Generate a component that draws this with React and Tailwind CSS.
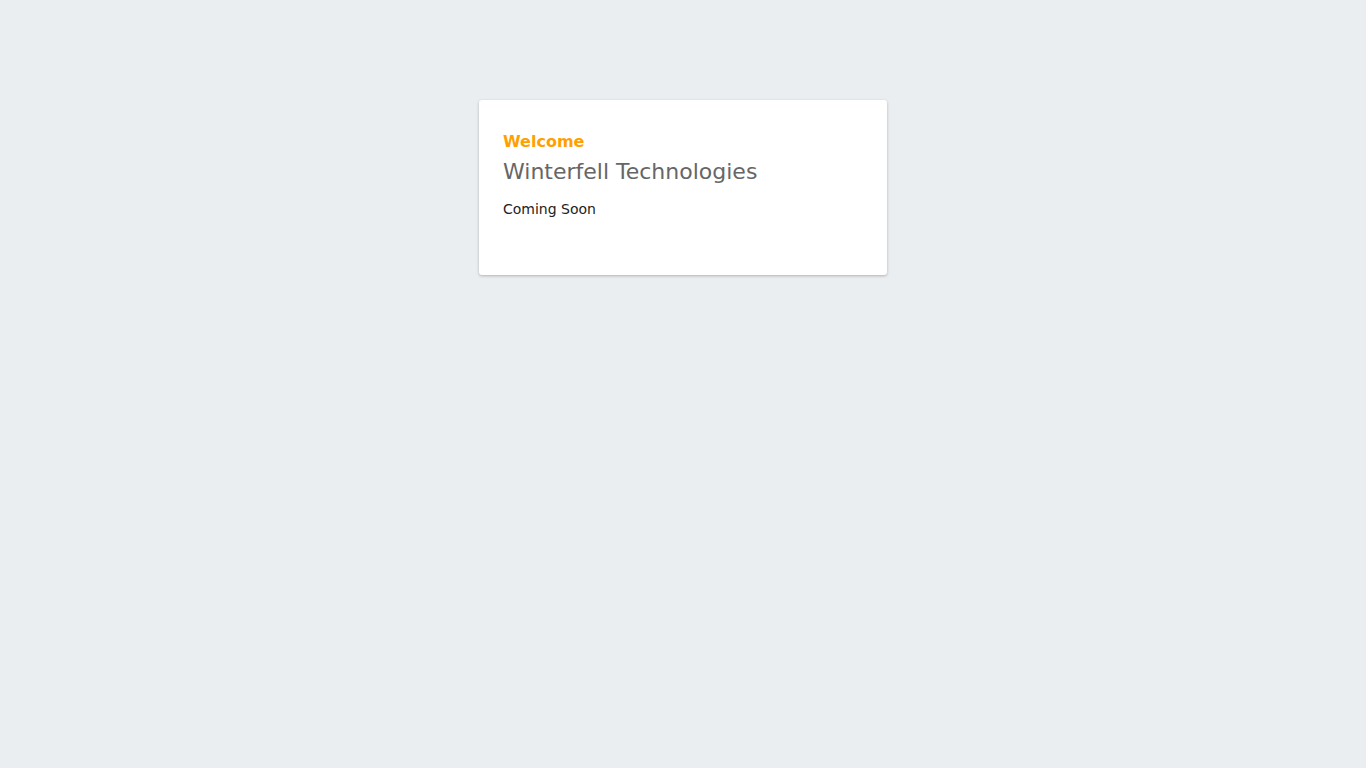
export default function App() {
  return (
    <div
      className="min-h-screen w-full bg-[#eaeef1] flex justify-center"
      style={{ fontFamily: '"DejaVu Sans", sans-serif' }}
    >
      <div className="mt-[100px] h-[175px] w-[408px] rounded-[3px] bg-white px-6 pt-[31px] shadow-[0_1px_3px_rgba(0,0,0,0.25)]">
        <div className="text-[16px] font-bold leading-[22px] text-[#ffa000]">Welcome</div>
        <h1 className="mt-[4px] text-[22px] leading-[30px] text-[#666666]">Winterfell Technologies</h1>
        <p className="mt-[12px] text-[14px] leading-[20px] text-[#222222]">Coming Soon</p>
      </div>
    </div>
  );
}
